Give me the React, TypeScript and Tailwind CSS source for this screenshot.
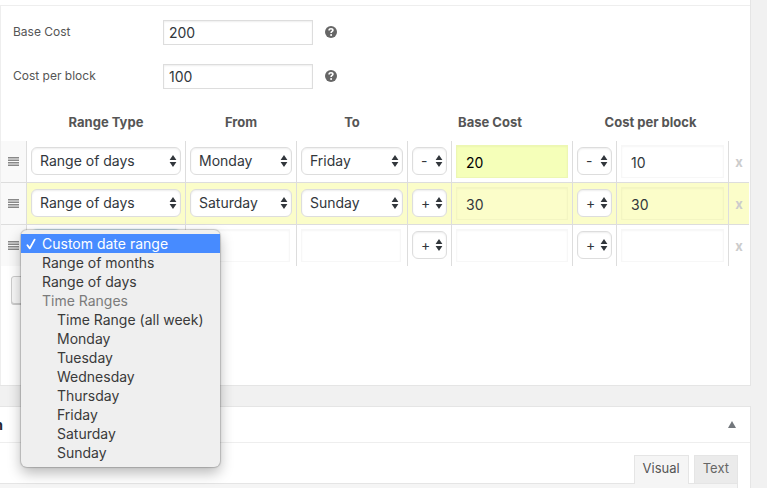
import type { ReactNode } from "react";

type Option = { label: string; kind?: "group" | "child" | "selected" };

const menuOptions: Option[] = [
  { label: "Custom date range", kind: "selected" },
  { label: "Range of months" },
  { label: "Range of days" },
  { label: "Time Ranges", kind: "group" },
  { label: "Time Range (all week)", kind: "child" },
  { label: "Monday", kind: "child" },
  { label: "Tuesday", kind: "child" },
  { label: "Wednesday", kind: "child" },
  { label: "Thursday", kind: "child" },
  { label: "Friday", kind: "child" },
  { label: "Saturday", kind: "child" },
  { label: "Sunday", kind: "child" },
];

const days = ["Monday", "Tuesday", "Wednesday", "Thursday", "Friday", "Saturday", "Sunday"];
const rangeTypes = ["Custom date range", "Range of months", "Range of days"];
const signs = ["+", "-"];

function Select({ label, value, options }: { label: string; value: string; options: string[] }) {
  return (
    <div className="relative">
      <select
        aria-label={label}
        defaultValue={value}
        className="block h-7 w-full appearance-none rounded-md border border-[#ddd] bg-white pr-4 pl-2 text-sm text-[#32373c] shadow-[inset_0_1px_2px_rgba(0,0,0,0.07)] outline-none"
      >
        {options.map((o) => (
          <option key={o}>{o}</option>
        ))}
      </select>
      <svg className="pointer-events-none absolute top-2 right-1 h-3 w-2" viewBox="0 0 8 12" fill="#32373c" aria-hidden="true">
        <path d="M4 0 7.4 5H.6zM4 12 .6 7h6.8z" />
      </svg>
    </div>
  );
}

function CellInput({ label, value, tone }: { label: string; value?: string; tone?: string }) {
  return (
    <input
      type="text"
      aria-label={label}
      defaultValue={value}
      className={`block h-[33px] w-full border border-black/3 px-[9px] pt-px text-sm shadow-[inset_0_1px_2px_rgba(0,0,0,0.04)] outline-none ${
        tone ?? "bg-transparent text-[#32373c]"
      }`}
    />
  );
}

function Cell({ children, className = "" }: { children?: ReactNode; className?: string }) {
  return <td className={`border-l border-[#ddd] px-1 pt-1 align-top ${className}`}>{children}</td>;
}

function RangeMenu() {
  return (
    <ul
      role="listbox"
      aria-label="Range type options"
      className="absolute top-0 -left-2.5 z-10 w-[199px] rounded-md bg-[#efefef] pt-1 pb-[5px] text-sm leading-[19px] text-[#3a3a3a] shadow-[0_0_1px_1px_rgba(0,0,0,0.18),0_6px_14px_rgba(0,0,0,0.28)]"
    >
      {menuOptions.map(({ label, kind }) => (
        <li
          key={label}
          role={kind === "group" ? "presentation" : "option"}
          aria-selected={kind === "group" ? undefined : kind === "selected"}
          className={`flex h-[19px] items-center whitespace-nowrap ${
            kind === "selected"
              ? "bg-[#478bff] pl-1 text-white"
              : kind === "group"
                ? "pl-[21px] text-[#7b7b7b]"
                : kind === "child"
                  ? "pl-9"
                  : "pl-[21px]"
          }`}
        >
          {kind === "selected" && (
            <svg className="mr-[5px] h-3 w-3" viewBox="0 0 12 12" fill="none" stroke="white" strokeWidth="1.8" strokeLinecap="round" strokeLinejoin="round" aria-hidden="true">
              <path d="M2.4 7.2 4.8 10.4 9.6 1.6" />
            </svg>
          )}
          {label}
        </li>
      ))}
    </ul>
  );
}

function Handle() {
  return (
    <td className="bg-[#f9f9f9] pt-4 pl-[7px] align-top">
      <svg className="h-[9px] w-[11px]" viewBox="0 0 11 9" fill="#888" aria-label="Drag to reorder">
        <path d="M0 0h11v1.6H0zM0 2.5h11v1.6H0zM0 5h11v1.6H0zM0 7.4h11V9H0z" />
      </svg>
    </td>
  );
}

function RemoveCell() {
  return (
    <td className="border-l border-[#ddd] text-center align-middle">
      <button type="button" aria-label="Remove range" className="block w-full text-[13px] leading-4 font-bold text-[#ccc]">
        x
      </button>
    </td>
  );
}

function Field({ id, label, value }: { id: string; label: string; value: string }) {
  return (
    <div className="flex h-11 items-start">
      <label htmlFor={id} className="w-[150px] pt-1 text-xs leading-4 text-[#555]">
        {label}
      </label>
      <input
        id={id}
        type="text"
        defaultValue={value}
        className="h-[25px] w-[150px] border border-[#ddd] bg-white px-[5px] text-sm text-[#32373c] shadow-[inset_0_1px_2px_rgba(0,0,0,0.07)] outline-none"
      />
      <svg className="mt-1.5 ml-3 size-3" viewBox="0 0 12 12" role="img" aria-label="Help">
        <circle cx="6" cy="6" r="6" fill="#666" />
        <path d="M4.1 4.6C4.1 3.3 4.9 2.7 6 2.7s1.9.6 1.9 1.6c0 1.2-1.8 1.2-1.8 2.7" fill="none" stroke="#fff" strokeWidth="1.6" />
        <circle cx="6.1" cy="8.9" r="1" fill="#fff" />
      </svg>
    </div>
  );
}

export default function App() {
  return (
    <div className="flex min-h-screen flex-col bg-[#f1f1f1] pr-4 font-['Inter','Liberation_Sans',sans-serif]">
      <section className="border-r border-b border-[#e5e5e5] bg-white pt-[5px]">
        <div className="border-t border-l border-[#eee] pt-3.5 pr-px pb-[81px]">
          <div className="pl-3">
            <Field id="base-cost" label="Base Cost" value="200" />
            <Field id="block-cost" label="Cost per block" value="100" />
          </div>
          <table className="w-full table-fixed border-separate border-spacing-0">
            <colgroup>
              <col className="w-[25px]" />
              <col className="w-[159px]" />
              <col className="w-[111px]" />
              <col className="w-[111px]" />
              <col className="w-[44px]" />
              <col />
              <col className="w-[44px]" />
              <col className="w-[112px]" />
              <col className="w-[21px]" />
            </colgroup>
            <thead>
              <tr className="h-[33px] text-[13px] leading-4 text-[#555]">
                <td />
                <th className="pb-1.5 pl-px font-bold">Range Type</th>
                <th className="pb-1.5 pl-px font-bold">From</th>
                <th className="pb-1.5 pl-px font-bold">To</th>
                <th className="pb-1.5 pl-px font-bold" colSpan={2}>Base Cost</th>
                <th className="pb-1.5 pl-px font-bold" colSpan={2}>Cost per block</th>
                <td />
              </tr>
            </thead>
            <tbody>
              <tr className="h-[41px]">
                <Handle />
                <Cell className="pt-1.5"><Select label="Range type" value="Range of days" options={rangeTypes} /></Cell>
                <Cell className="pt-1.5"><Select label="From" value="Monday" options={days} /></Cell>
                <Cell className="pt-1.5"><Select label="To" value="Friday" options={days} /></Cell>
                <Cell className="pt-1.5"><Select label="Base cost sign" value="-" options={signs} /></Cell>
                <Cell><CellInput label="Base cost" value="20" tone="bg-[#f5ffb9] text-black" /></Cell>
                <Cell className="pt-1.5"><Select label="Block cost sign" value="-" options={signs} /></Cell>
                <Cell><CellInput label="Cost per block" value="10" /></Cell>
                <RemoveCell />
              </tr>
              <tr className="h-[42px] bg-[#fbfdc9] *:border-t *:border-[#ddd]">
                <Handle />
                <Cell className="pt-1.5"><Select label="Range type" value="Range of days" options={rangeTypes} /></Cell>
                <Cell className="pt-1.5"><Select label="From" value="Saturday" options={days} /></Cell>
                <Cell className="pt-1.5"><Select label="To" value="Sunday" options={days} /></Cell>
                <Cell className="pt-1.5"><Select label="Base cost sign" value="+" options={signs} /></Cell>
                <Cell><CellInput label="Base cost" value="30" /></Cell>
                <Cell className="pt-1.5"><Select label="Block cost sign" value="+" options={signs} /></Cell>
                <Cell><CellInput label="Cost per block" value="30" /></Cell>
                <RemoveCell />
              </tr>
              <tr className="h-[42px] *:border-t *:border-[#ddd]">
                <Handle />
                <Cell className="pt-[5px]">
                  <div className="relative">
                    <button
                      type="button"
                      aria-label="Range type"
                      aria-haspopup="listbox"
                      aria-expanded="true"
                      className="block h-7 w-full rounded-md border border-[#5b9dd9] bg-white shadow-[0_0_2px_rgba(30,140,190,0.8)]"
                    />
                    <RangeMenu />
                  </div>
                </Cell>
                <Cell><div className="pr-0.5"><CellInput label="From date" /></div></Cell>
                <Cell><div className="pr-0.5"><CellInput label="To date" /></div></Cell>
                <Cell className="pt-1.5"><Select label="Base cost sign" value="+" options={signs} /></Cell>
                <Cell><CellInput label="Base cost" /></Cell>
                <Cell className="pt-1.5"><Select label="Block cost sign" value="+" options={signs} /></Cell>
                <Cell><CellInput label="Cost per block" /></Cell>
                <RemoveCell />
              </tr>
            </tbody>
          </table>
          <button
            type="button"
            aria-label="Add range"
            className="mt-2.5 ml-2.5 block h-7 w-24 rounded-[3px] border border-[#ccc] bg-[#f7f7f7] shadow-[0_1px_0_#ccc]"
          />
        </div>
      </section>

      <section className="mt-5 flex grow flex-col border-t border-r border-[#e5e5e5] bg-white">
        <header className="flex h-9 items-center justify-between border-b border-[#eee] pr-3.5">
          <h2 className="flex w-[3px] justify-end overflow-hidden text-sm font-bold text-[#23282d]">n</h2>
          <button type="button" aria-label="Toggle panel">
            <svg className="h-[7px] w-2" viewBox="0 0 8 7" fill="#72777c" aria-hidden="true">
              <path d="M4 0 8 7H0z" />
            </svg>
          </button>
        </header>
        <div className="flex grow flex-col pt-3 pr-3">
          <div className="relative z-1 -mb-px flex justify-end gap-[5px] text-[13px]">
            <button type="button" className="h-[29px] border border-b-0 border-[#e5e5e5] bg-[#f5f5f5] px-2 pb-0.5 text-[#555]">Visual</button>
            <button type="button" className="mb-px h-7 border border-b-0 border-[#e5e5e5] bg-[#ebebeb] px-2 pb-0.5 text-[#666]">Text</button>
          </div>
          <div className="grow border-t border-r border-[#e5e5e5] bg-[#f5f5f5]" />
        </div>
      </section>
    </div>
  );
}
